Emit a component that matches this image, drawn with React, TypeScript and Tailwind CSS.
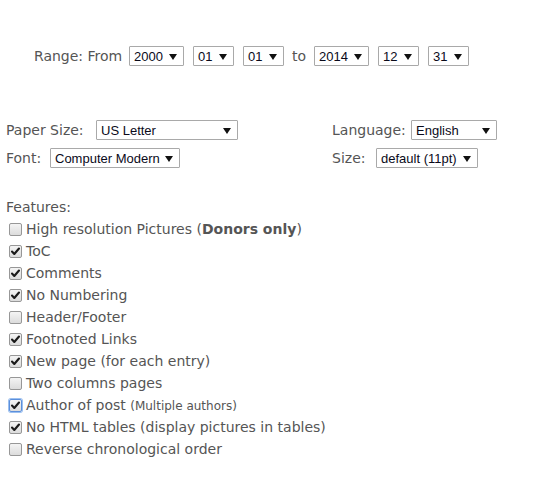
import React from "react";

function Select({ value, width }: { value: string; width: number }) {
  return (
    <div
      className="relative h-5 shrink-0 border border-[#a9a9a9] bg-white rounded-[1px] flex items-center pl-[4px] text-[13px] text-[#0a0a1a] leading-none"
      style={{ width, fontFamily: '"Liberation Sans", Arial, sans-serif' }}
    >
      <span>{value}</span>
      <svg
        className="absolute right-[6px] top-[7px]"
        width="8"
        height="6"
        viewBox="0 0 8 6"
      >
        <path d="M0 0 H8 L4 6 Z" fill="#111" />
      </svg>
    </div>
  );
}

function Checkbox({ checked, focused }: { checked: boolean; focused?: boolean }) {
  return (
    <span
      className={
        "relative inline-block w-[13px] h-[13px] shrink-0 rounded-[2px] bg-gradient-to-b from-[#f4f4f4] to-[#dcdcdc] " +
        (focused ? "border border-[#5b8fdc] ring-1 ring-[#9cc0f0]" : "border border-[#979797]")
      }
    >
      {checked && (
        <svg
          className="absolute left-[0px] top-[0px]"
          width="11"
          height="11"
          viewBox="0 0 11 11"
        >
          <path
            d="M2 5.5 L4.3 8 L9 2.5"
            stroke="#1a1a1a"
            strokeWidth="2.1"
            fill="none"
            strokeLinecap="round"
            strokeLinejoin="round"
          />
        </svg>
      )}
    </span>
  );
}

const features: { label: React.ReactNode; checked: boolean; focused?: boolean }[] = [
  {
    label: (
      <>
        High resolution Pictures (<b className="font-bold">Donors only</b>)
      </>
    ),
    checked: false,
  },
  { label: "ToC", checked: true },
  { label: "Comments", checked: true },
  { label: "No Numbering", checked: true },
  { label: "Header/Footer", checked: false },
  { label: "Footnoted Links", checked: true },
  { label: "New page (for each entry)", checked: true },
  { label: "Two columns pages", checked: false },
  {
    label: (
      <>
        Author of post <span className="text-[12px]">(Multiple authors)</span>
      </>
    ),
    checked: true,
    focused: true,
  },
  { label: "No HTML tables (display pictures in tables)", checked: true },
  { label: "Reverse chronological order", checked: false },
];

export default function App() {
  return (
    <div
      className="w-[536px] h-[478px] bg-white text-[#555] text-[14px] overflow-hidden"
      style={{ fontFamily: '"DejaVu Sans", Verdana, sans-serif' }}
    >
      <div className="pt-[46px] pl-[34px] flex items-center h-[66px]">
        <span className="w-[95px] shrink-0">Range: From</span>
        <Select value="2000" width={55} />
        <div className="w-[9px]" />
        <Select value="01" width={41} />
        <div className="w-[9px]" />
        <Select value="01" width={41} />
        <span className="w-[30px] shrink-0 text-center">to</span>
        <Select value="2014" width={55} />
        <div className="w-[9px]" />
        <Select value="12" width={41} />
        <div className="w-[9px]" />
        <Select value="31" width={41} />
      </div>

      <div className="mt-[54px] pl-[6px] grid grid-cols-[326px_1fr] gap-y-[8px]">
        <div className="flex items-center h-5 gap-[8px]">
          <span className="w-[82px] shrink-0 whitespace-nowrap">Paper Size:</span>
          <Select value="US Letter" width={142} />
        </div>
        <div className="flex items-center h-5 gap-[6px]">
          <span className="w-[73px] shrink-0 whitespace-nowrap">Language:</span>
          <Select value="English" width={86} />
        </div>
        <div className="flex items-center h-5 gap-[8px]">
          <span className="w-[36px] shrink-0">Font:</span>
          <Select value="Computer Modern" width={130} />
        </div>
        <div className="flex items-center h-5 gap-[8px]">
          <span className="w-[36px] shrink-0">Size:</span>
          <Select value="default (11pt)" width={102} />
        </div>
      </div>

      <div className="mt-[28px] pl-[6px]">
        <div className="h-[22px] flex items-center">Features:</div>
        {features.map((f, i) => (
          <div key={i} className="h-[22px] flex items-center">
            <span className="ml-[3px] mr-[4px] flex">
              <Checkbox checked={f.checked} focused={f.focused} />
            </span>
            <span className="whitespace-nowrap">{f.label}</span>
          </div>
        ))}
      </div>
    </div>
  );
}
